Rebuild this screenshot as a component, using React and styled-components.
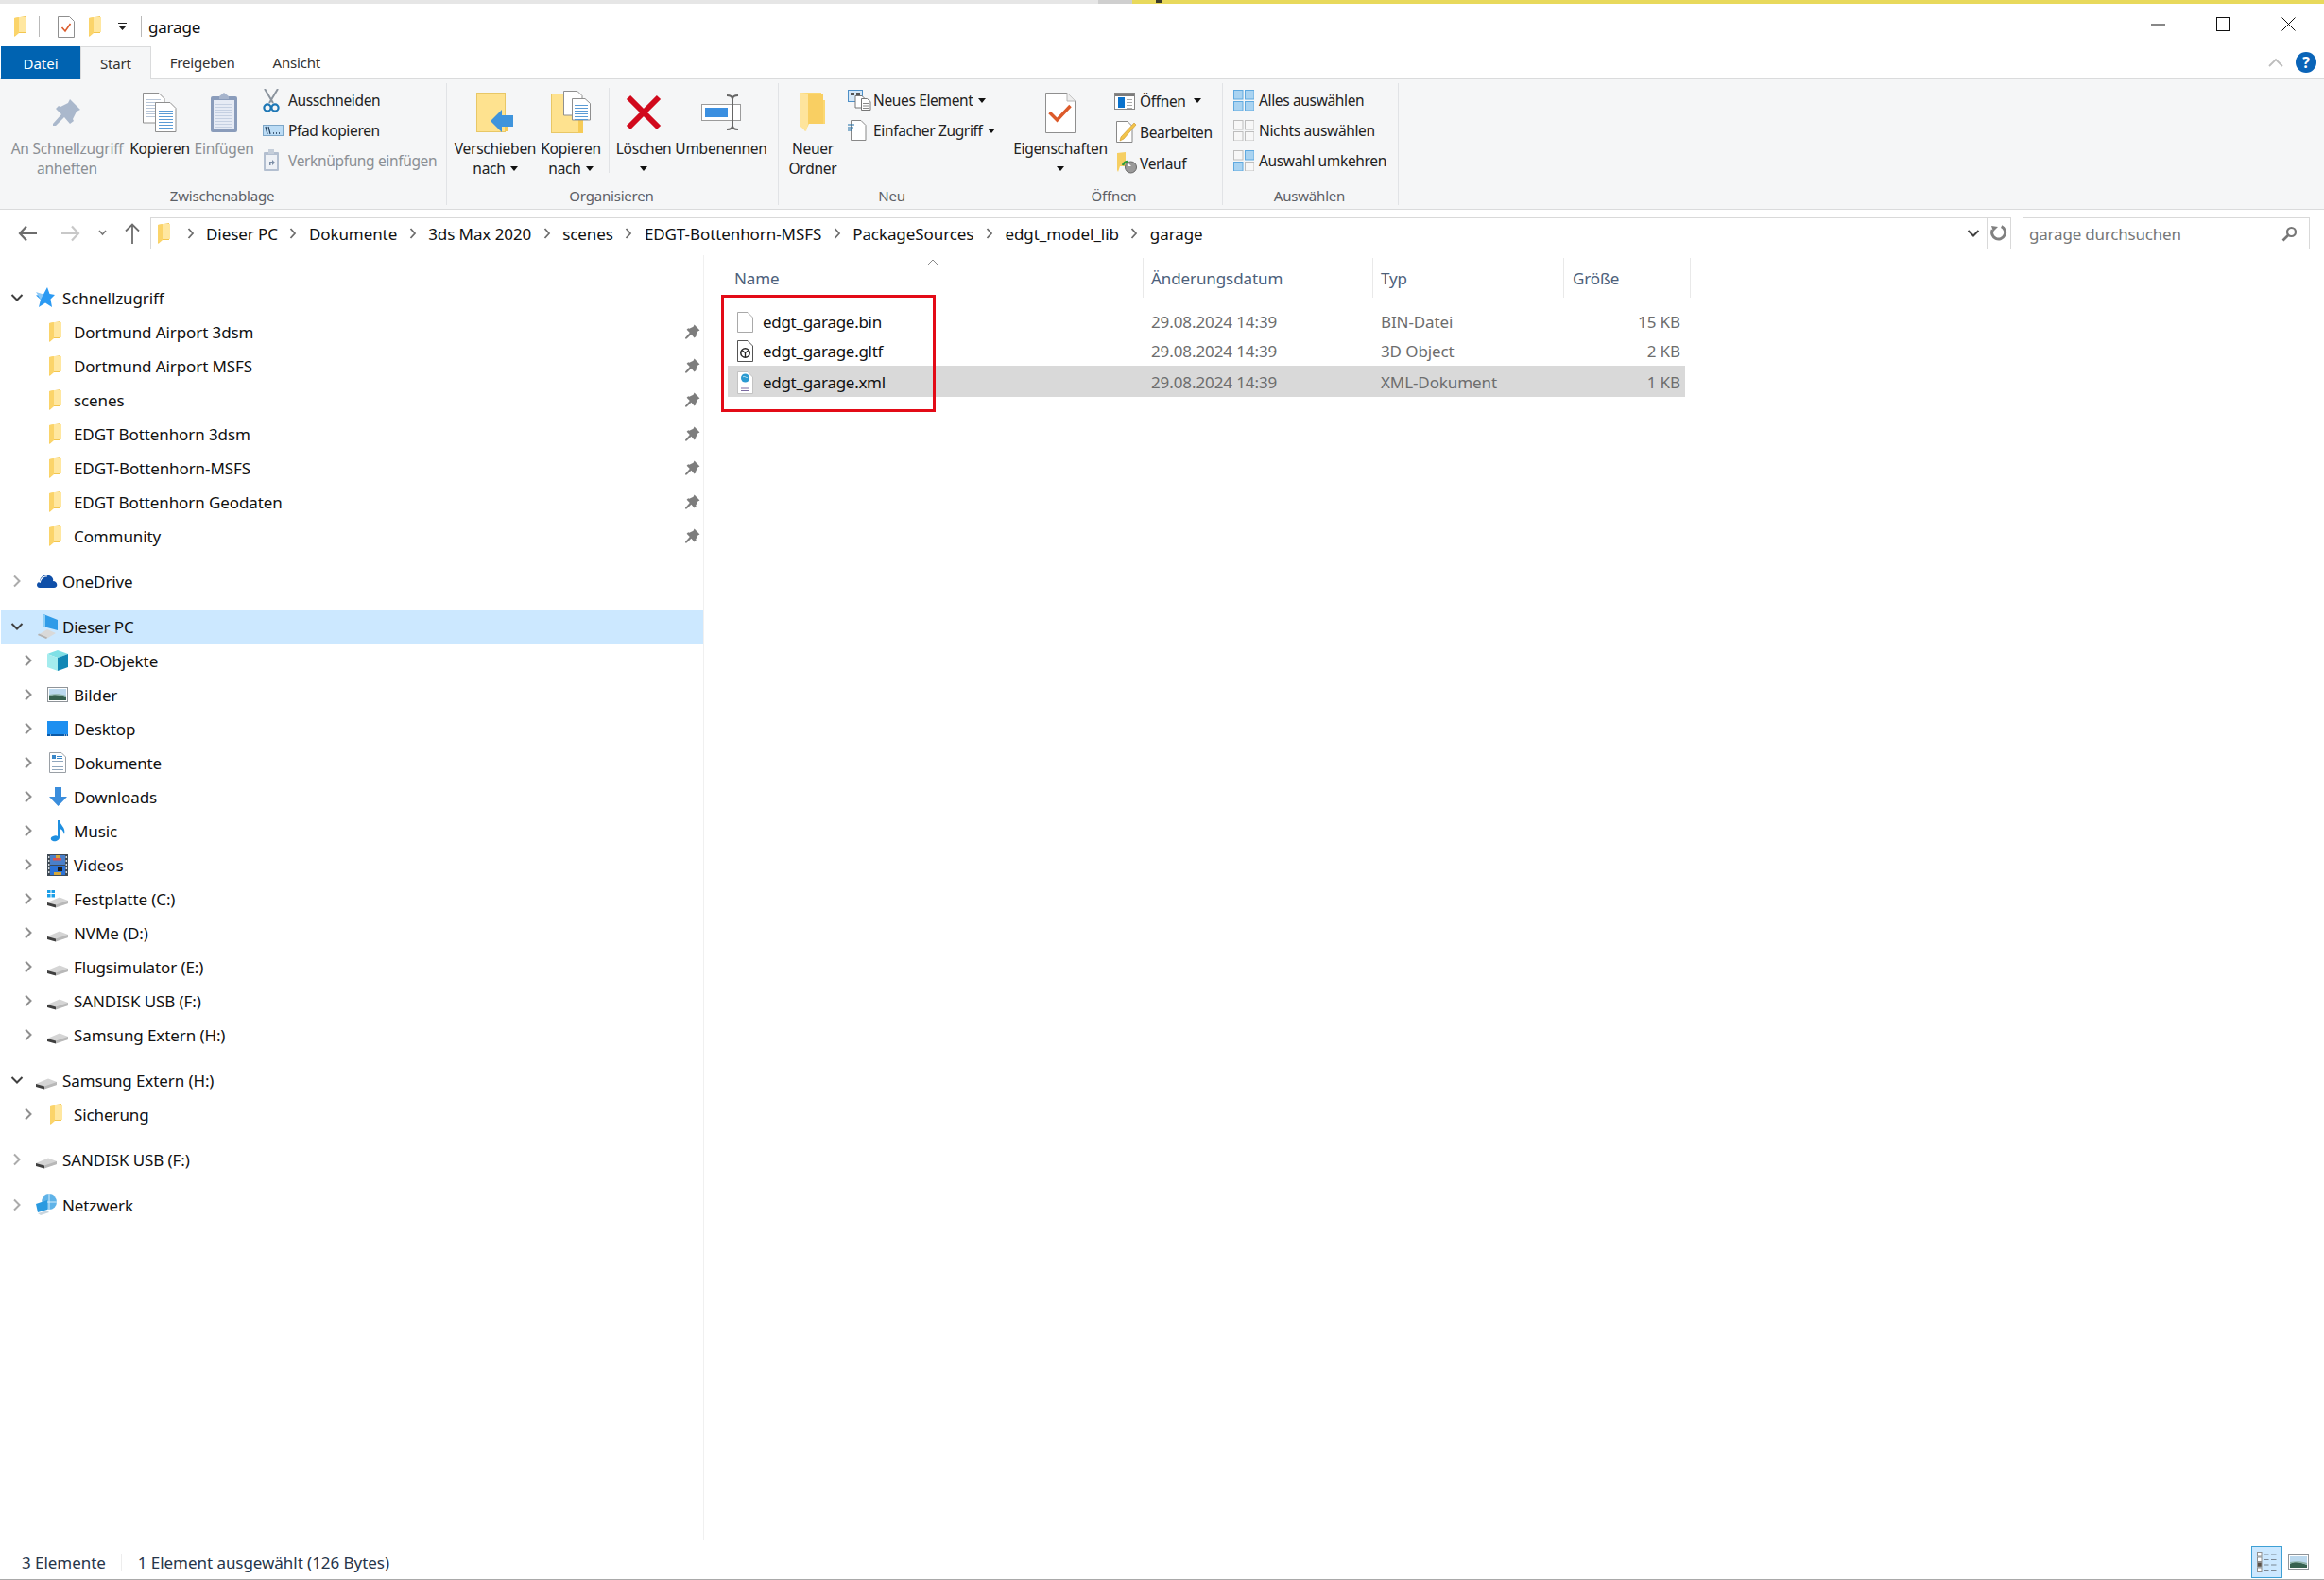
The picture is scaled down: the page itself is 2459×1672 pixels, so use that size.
import React from 'react';
import styled, { createGlobalStyle } from 'styled-components';

const Global = createGlobalStyle`
  html, body { margin: 0; padding: 0; background: #fff; }
  body { font-family: "Noto Sans", "Open Sans", "Liberation Sans", sans-serif; color: #1a1a1a; }
  * { box-sizing: border-box; }
`;

const Window = styled.div`
  width: 2459px;
  height: 1672px;
  display: flex;
  flex-direction: column;
  overflow: hidden;
  background: #fff;
`;

const TopStrip = styled.div`
  height: 4px;
  flex: none;
  display: flex;
`;
const StripGray = styled.div`
  width: 1198px;
  background: linear-gradient(90deg, #e6e6e6 0, #e6e6e6 97%, #cfcfcf 97%);
`;
const StripYellow = styled.div`
  flex: 1;
  background: #e8d95c;
  padding-left: 25px;
  &::before {
    content: "";
    display: block;
    width: 7px;
    height: 3px;
    background: #3a3a2a;
  }
`;

const TitleBar = styled.div`
  height: 45px;
  flex: none;
  display: flex;
  align-items: center;
  padding-left: 15px;
  padding-top: 3px;
`;
const TitleSep = styled.span`
  width: 1px;
  height: 22px;
  background: #b9b9b9;
  margin: ${p => p.$m};
`;
const TitleText = styled.span`
  font-size: 17px;
  letter-spacing: -0.2px;
  color: #111;
`;
const WindowButtons = styled.div`
  margin-left: auto;
  margin-right: 30px;
  margin-bottom: 5px;
  display: flex;
  align-items: center;
  gap: 54px;
`;
const Spaced = styled.span`
  display: inline-flex;
  margin: ${p => p.$m || 0};
`;

const Tabs = styled.div`
  height: 35px;
  flex: none;
  display: flex;
  align-items: stretch;
  padding-left: 1px;
  border-bottom: 1px solid #dadbdc;
`;
const FileTab = styled.div`
  width: 84px;
  background: #0063b1;
  color: #fff;
  font-size: 15px;
  display: flex;
  align-items: center;
  justify-content: center;
  margin-bottom: -1px;
`;
const Tab = styled.div`
  padding: 0 20px;
  font-size: 15px;
  display: flex;
  align-items: center;
  color: #333;
  letter-spacing: -0.2px;
  ${p => p.$active && `
    background: #f5f6f7;
    border: 1px solid #dadbdc;
    border-bottom: none;
    margin-bottom: -1px;
  `}
`;
const TabRight = styled.div`
  margin-left: auto;
  padding-right: 8px;
  display: flex;
  align-items: center;
  gap: 13px;
`;
const Help = styled.div`
  width: 22px;
  height: 22px;
  border-radius: 50%;
  background: #0a64b8;
  color: #fff;
  font-size: 16px;
  font-weight: 700;
  display: flex;
  align-items: center;
  justify-content: center;
`;

const Ribbon = styled.div`
  height: 138px;
  flex: none;
  display: flex;
  background: #f5f6f7;
  border-bottom: 1px solid #dadbdc;
  padding-right: 3px;
`;
const Group = styled.div`
  width: ${p => p.$w}px;
  flex: none;
  display: flex;
  flex-direction: column;
  border-right: 1px solid #e1e3e6;
  margin: 4px 0 4px;
`;
const GroupBody = styled.div`
  flex: none;
  height: 107px;
  padding-top: 3px;
  padding-left: ${p => p.$pl || 0}px;
  display: flex;
`;
const GroupLabel = styled.div`
  text-align: center;
  font-size: 15px;
  line-height: 24px;
  color: #5c6066;
  letter-spacing: -0.2px;
  padding-right: 2px;
`;
const BigButton = styled.div`
  width: ${p => p.$w}px;
  flex: none;
  display: flex;
  flex-direction: column;
  align-items: center;
  font-size: 15.5px;
  letter-spacing: -0.25px;
  line-height: 21px;
  white-space: nowrap;
  color: ${p => (p.$off ? '#8b8f94' : '#222')};
`;
const BigIcon = styled.div`
  height: 56px;
  display: flex;
  align-items: center;
  justify-content: center;
`;
const Caret = styled.span`
  display: inline-block;
  width: 0;
  height: 0;
  margin-left: ${p => p.$ml ?? 5}px;
  vertical-align: 3px;
  border-left: 4.5px solid transparent;
  border-right: 4.5px solid transparent;
  border-top: 5px solid #111;
`;
const InnerSep = styled.div`
  width: 1px;
  height: 90px;
  margin: 2px 0 0 10px;
  background: #e1e3e6;
  flex: none;
`;
const SmallColumn = styled.div`
  margin-left: ${p => p.$ml || 0}px;
  margin-top: -1px;
  display: flex;
  flex-direction: column;
`;
const SmallRow = styled.div`
  height: ${p => p.$h || 32}px;
  display: flex;
  align-items: center;
  font-size: 15.5px;
  letter-spacing: -0.35px;
  white-space: nowrap;
  color: ${p => (p.$off ? '#8b8f94' : '#222')};
`;
const SmallIcon = styled.span`
  width: 27px;
  flex: none;
  display: flex;
  align-items: center;
`;

const NavBar = styled.div`
  height: 48px;
  flex: none;
  display: flex;
  align-items: flex-start;
  padding: 8px 15px 0 19px;
`;
const NavIcon = styled.div`
  height: 33px;
  margin-right: ${p => p.$mr || 0}px;
  display: flex;
  align-items: center;
`;
const AddressBox = styled.div`
  flex: 1;
  height: 34px;
  border: 1px solid #d9d9d9;
  display: flex;
  align-items: center;
  padding-left: 7px;
  font-size: 17px;
  letter-spacing: -0.08px;
  color: #111;
  white-space: nowrap;
`;
const CrumbSep = styled.span`
  width: 33px;
  flex: none;
  display: flex;
  justify-content: center;
`;
const AddressEnd = styled.div`
  margin-left: auto;
  display: flex;
  align-items: center;
  height: 100%;
  padding-right: 7px;
`;
const RefreshBox = styled.div`
  width: 26px;
  height: 34px;
  margin-left: -1px;
  border: 1px solid #d9d9d9;
  display: flex;
  align-items: center;
  justify-content: center;
`;
const SearchBox = styled.div`
  width: 304px;
  height: 34px;
  margin-left: 12px;
  border: 1px solid #d9d9d9;
  display: flex;
  align-items: center;
  justify-content: space-between;
  padding: 0 12px 0 6px;
  font-size: 17px;
  letter-spacing: -0.2px;
  color: #777;
`;

const Main = styled.div`
  flex: 1;
  min-height: 0;
  display: flex;
`;
const Sidebar = styled.div`
  width: 745px;
  flex: none;
  padding: 27px 0 0 1px;
  border-right: 1px solid #f0f0f0;
  margin-bottom: 5px;
`;
const Section = styled.div`
  margin-bottom: 12px;
`;
const Row = styled.div`
  height: 36px;
  display: flex;
  align-items: center;
  padding-left: ${p => (p.$child ? 19 : 7)}px;
  padding-right: 3px;
  font-size: 17px;
  letter-spacing: -0.1px;
  color: #111;
  background: ${p => (p.$selected ? '#cce8ff' : 'transparent')};
`;
const RowChevron = styled.span`
  width: 20px;
  flex: none;
  display: flex;
  justify-content: center;
  margin-right: 10px;
`;
const RowIcon = styled.span`
  width: 28px;
  flex: none;
  display: flex;
  align-items: center;
`;
const RowPin = styled.span`
  margin-left: auto;
  display: flex;
`;

const Content = styled.div`
  flex: 1;
  position: relative;
  padding-left: 25px;
`;
const FileGrid = styled.div`
  display: grid;
  grid-template-columns: 439px 243px 202px 129px;
  width: 1013px;
  align-items: center;
`;
const HeaderGrid = styled(FileGrid)`
  margin-top: 3px;
  height: 42px;
  width: 1019px;
  grid-template-columns: 439px 243px 202px 135px;
  align-items: stretch;
  border-right: 1px solid #e9e9e9;
`;
const HeaderCell = styled.div`
  font-size: 17px;
  letter-spacing: -0.1px;
  color: #4c607a;
  display: flex;
  align-items: center;
  padding-left: ${p => p.$pl}px;
  border-left: ${p => (p.$line ? '1px solid #e9e9e9' : 'none')};
`;
const SortArrow = styled.span`
  position: absolute;
  left: 236px;
  top: 4px;
  display: flex;
`;
const FileList = styled.div`
  margin-top: 10px;
`;
const FileRow = styled(FileGrid)`
  height: ${p => (p.$selected ? 33 : 31)}px;
  padding-top: ${p => (p.$selected ? 2 : 0)}px;
  background: ${p => (p.$selected ? '#d9d9d9' : 'transparent')};
`;
const FileName = styled.div`
  display: flex;
  align-items: center;
  padding-left: 10px;
  font-size: 17px;
  letter-spacing: -0.3px;
  color: #111;
`;
const FileIcon = styled.span`
  width: 27px;
  flex: none;
  display: flex;
`;
const FileMeta = styled.div`
  font-size: 17px;
  letter-spacing: -0.1px;
  color: #6d6d6d;
  padding-left: ${p => p.$pl || 0}px;
  padding-right: ${p => p.$pr || 0}px;
  text-align: ${p => p.$right ? 'right' : 'left'};
`;
const RedBox = styled.div`
  position: absolute;
  left: 18px;
  top: 42px;
  width: 227px;
  height: 124px;
  border: 3px solid #e30b17;
`;

const StatusBar = styled.div`
  height: 37px;
  flex: none;
  display: flex;
  align-items: center;
  padding-left: 23px;
  border-bottom: 1px solid #a9a9a9;
  font-size: 17px;
  letter-spacing: -0.05px;
  color: #26354a;
`;
const StatusItem = styled.span`
  padding-right: ${p => p.$pr}px;
  margin-right: 17px;
  position: relative;
  &::after {
    content: "";
    position: absolute;
    right: 0;
    top: 3px;
    bottom: 3px;
    width: 1px;
    background: #ededed;
  }
`;
const ViewButtons = styled.div`
  margin-left: auto;
  margin-right: 16px;
  display: flex;
  align-items: center;
  gap: 6px;
`;
const ViewActive = styled.div`
  width: 33px;
  height: 34px;
  background: #cce8ff;
  border: 1px solid #3ea0d5;
  display: flex;
  align-items: center;
  justify-content: center;
`;

/* ---------- drawings ---------- */

const Folder = ({ w = 15, h = 22 }) => (
  <svg width={w} height={h} viewBox="0 0 15 22">
    <path d="M0 2 L12 0 V18 H4 L0 22 Z" fill="#f3c64f" />
    <path d="M4 1 H13 V17 H4 Z" fill="#ffe7a0" />
    <path d="M0 2 L5 1 V18 L1 21.5 L0 20 Z" fill="#fbd46a" />
  </svg>
);

const BigFolder = () => (
  <svg width="29" height="42" viewBox="0 0 29 42">
    <path d="M1 0 H23 V8 H27 V33 H10 L6 41 L1 34 Z" fill="#fbd873" />
    <path d="M9 1 H25 V33 H9 Z" fill="#f9cf62" />
    <path d="M1 0 L9 1 V33 L7 41 L1 36 Z" fill="#fee49c" />
  </svg>
);

const TitleCheckDoc = () => (
  <svg width="18" height="23" viewBox="0 0 18 23">
    <path d="M.5.5h12l5 5v17H.5z" fill="#fff" stroke="#8f8f8f" />
    <path d="M4.5 12l3.5 4 5.5-8" fill="none" stroke="#db5b2b" strokeWidth="1.6" />
  </svg>
);

const Chev = ({ light, dark }) => (
  <svg width="10" height="14" viewBox="0 0 10 14">
    <path d="M2 1.5 L7.5 7 L2 12.5" fill="none" stroke={dark ? '#444' : light ? '#ababab' : '#8f8f8f'} strokeWidth="2" />
  </svg>
);

const ChevDown = () => (
  <svg width="14" height="10" viewBox="0 0 14 10">
    <path d="M1.5 2 L7 7.5 L12.5 2" fill="none" stroke="#404040" strokeWidth="2" />
  </svg>
);

const CrumbChev = () => (
  <svg width="8" height="12" viewBox="0 0 8 12">
    <path d="M1.5 1 L6 6 L1.5 11" fill="none" stroke="#6d6d6d" strokeWidth="1.8" />
  </svg>
);

const PinPath = "M18 1 L29 12 L25 14 L21 22 L22 24 L18 27 L12 20 L3 29 L0 29 L0 27 L9 17 L3 11 L6 8 L8 9 L16 5 Z";
const Pin = ({ size = 16, color = '#7d7d7d' }) => (
  <svg width={size} height={size} viewBox="0 0 30 30"><path d={PinPath} fill={color} /></svg>
);

const DocLines = ({ x, y, w, n, step = 3, c = '#5b9bd5' }) => (
  <g stroke={c} strokeWidth="1">
    {Array.from({ length: n }, (_, i) => (
      <line key={i} x1={x} x2={x + w} y1={y + i * step + 0.5} y2={y + i * step + 0.5} />
    ))}
  </g>
);

const CopyIcon = () => (
  <svg width="36" height="42" viewBox="0 0 36 42">
    <path d="M.5.5H17l6 6V32H.5z" fill="#fff" stroke="#8f8f8f" />
    <DocLines x={4} y={7} w={15} n={7} c="#b8c6d8" />
    <path d="M13.5 10.5H29l6 6V41.5H13.5z" fill="#fff" stroke="#8f8f8f" />
    <DocLines x={17} y={19} w={15} n={7} />
  </svg>
);

const Clipboard = () => (
  <svg width="30" height="43" viewBox="0 0 30 43">
    <rect x="1" y="4" width="28" height="38" rx="2" fill="#8a9cbb" />
    <path d="M10 4 L15 0 L20 4 V7 H10 Z" fill="#a6b4cc" />
    <rect x="4" y="8" width="22" height="31" fill="#e6ebf5" />
    <DocLines x={6} y={12} w={18} n={9} c="#c5d0e2" />
  </svg>
);

const Scissors = () => (
  <svg width="18" height="25" viewBox="0 0 18 25">
    <path d="M2 0 L11 15 M16 0 L7 15" stroke="#8b949e" strokeWidth="2" fill="none" />
    <circle cx="5" cy="20" r="3.6" fill="none" stroke="#1c76b5" strokeWidth="2.2" />
    <circle cx="13" cy="20" r="3.6" fill="none" stroke="#1c76b5" strokeWidth="2.2" />
  </svg>
);

const PathIcon = () => (
  <svg width="22" height="12" viewBox="0 0 22 12">
    <rect x=".5" y=".5" width="21" height="11" fill="#bcdcf5" stroke="#7ca6c8" />
    <path d="M3 2l2 8M6 2l2 8" stroke="#1a3553" strokeWidth="1.1" />
    <path d="M11 9h1M14 9h1M17 9h1" stroke="#1a3553" strokeWidth="1.3" />
  </svg>
);

const ShortcutClip = () => (
  <svg width="18" height="24" viewBox="0 0 18 24">
    <rect x="1" y="3" width="16" height="20" rx="1" fill="#b3bfd0" />
    <rect x="6" y="0" width="6" height="5" fill="#c5ceda" />
    <rect x="3" y="6" width="12" height="15" fill="#eef1f6" />
    <path d="M7 17v-4h3v-2l3 3-3 3v-2H8.500v2z" fill="#7c8ea6" />
  </svg>
);

const MoveFolder = () => (
  <svg width="40" height="43" viewBox="0 0 40 43">
    <rect x=".5" y=".5" width="30" height="41" fill="#fee28f" stroke="#e8c766" />
    <rect x="30" y="24" width="3" height="17" fill="#f6cb57" />
    <path d="M15 30 L27 18 V24 H39 V36 H27 V42 Z" fill="#3f94dc" />
  </svg>
);

const CopyFolder = () => (
  <svg width="42" height="46" viewBox="0 0 42 46">
    <rect x=".5" y="3.500" width="30" height="41" fill="#fee28f" stroke="#e8c766" />
    <rect x="29" y="30" width="5" height="15" fill="#f6cb57" />
    <path d="M13.500.5H28l5 5V26H13.500z" fill="#fff" stroke="#8f8f8f" />
    <path d="M22.500 8.500H36l5.500 5V31H22.500z" fill="#fff" stroke="#8f8f8f" />
    <DocLines x={25} y={15} w={14} n={6} />
  </svg>
);

const DeleteIcon = () => (
  <svg width="38" height="38" viewBox="0 0 38 38">
    <path d="M3 3 L35 35 M35 3 L3 35" stroke="#d1091c" strokeWidth="6" />
  </svg>
);

const RenameIcon = () => (
  <svg width="43" height="38" viewBox="0 0 43 38">
    <rect x=".5" y="10.500" width="41" height="17" fill="#fff" stroke="#9b9b9b" />
    <rect x="4" y="14" width="24" height="10" fill="#3b8fe0" />
    <path d="M27 1c4 0 6 1 6 4v28c0 3-2 4-6 4M39 1c-4 0-6 1-6 4v28c0 3 2 4 6 4" fill="none" stroke="#666" strokeWidth="2" />
  </svg>
);

const NewItem = () => (
  <svg width="25" height="22" viewBox="0 0 25 22">
    <rect x=".5" y=".5" width="15" height="12" fill="#d5e7f6" stroke="#4d8fc7" />
    <rect x="3" y="3" width="4" height="3" fill="#555" /><rect x="9" y="3" width="4" height="3" fill="#555" />
    <path d="M8 6.500H15l3 3V19H8z" fill="#fff" stroke="#777" />
    <path d="M14.500 9.500h6l3.500 3V21.500h-9.500z" fill="#fff" stroke="#777" />
    <DocLines x={16} y={14} w={6} n={3} step={2.500} c="#888" />
  </svg>
);

const EasyAccess = () => (
  <svg width="20" height="22" viewBox="0 0 20 22">
    <path d="M3.500.5H14l5 5V21.500H3.500z" fill="#fff" stroke="#888" />
    <path d="M0 5h7M0 8h6M0 11h4" stroke="#1f6fa8" strokeWidth="1.2" />
  </svg>
);

const PropsIcon = () => (
  <svg width="32" height="43" viewBox="0 0 32 43">
    <path d="M.5.5H23l8.500 8.500V42.500H.5z" fill="#fff" stroke="#8f8f8f" />
    <path d="M23 .5V9h8.500" fill="#eee" stroke="#b5b5b5" />
    <path d="M4.500 21l8 8 14-15" fill="none" stroke="#dc5a2a" strokeWidth="3.400" />
  </svg>
);

const OpenIcon = () => (
  <svg width="22" height="18" viewBox="0 0 22 18">
    <rect x=".5" y=".5" width="21" height="17" fill="#fff" stroke="#888" />
    <rect x="1" y="1" width="20" height="3" fill="#7b7b7b" />
    <rect x="4" y="5" width="7" height="11" fill="#0a72cc" />
    <DocLines x={13} y={7} w={6} n={4} c="#aaa" />
  </svg>
);

const EditIcon = () => (
  <svg width="22" height="23" viewBox="0 0 22 23">
    <path d="M.5.5H12l5 5V22.500H.5z" fill="#fff" stroke="#888" />
    <path d="M19 2 L21 4 L8 19 L4 21 L5 17 Z" fill="#f2c34a" stroke="#c9932a" strokeWidth=".6" />
  </svg>
);

const HistoryIcon = () => (
  <svg width="21" height="23" viewBox="0 0 21 23">
    <path d="M0 1 L9 0 V15 H3 L1 21 L0 19 Z" fill="#f6cf63" />
    <circle cx="14.500" cy="16" r="6" fill="#9a9a9a" stroke="#666" />
    <path d="M6 14a6 6 0 0 1 6-4" fill="none" stroke="#2d9c3c" strokeWidth="2.500" />
    <path d="M12 12l3 3h-3z" fill="#fff" />
  </svg>
);

const SelectIcon = ({ on = [1, 1, 1, 1], color = '#5fa9df', fill = '#a9d3f1' }) => {
  const spots = [[0, 0], [12, 0], [0, 12], [12, 12]];
  return (
    <svg width="22" height="22" viewBox="0 0 22 22">
      {spots.map(([x, y], i) => (
        <rect key={i} x={x + .5} y={y + .5} width="9.500" height="9.500"
          fill={on[i] ? fill : '#f7f7f7'} stroke={on[i] ? color : '#bdbdbd'} />
      ))}
    </svg>
  );
};

const ArrowLeft = ({ color = '#6d6d6d' }) => (
  <svg width="20" height="18" viewBox="0 0 20 18">
    <path d="M9 1.500 L2 9 L9 16.500 M2 9 H20" fill="none" stroke={color} strokeWidth="2.200" />
  </svg>
);

const ArrowRight = ({ color = '#c8c8c8' }) => (
  <svg width="20" height="18" viewBox="0 0 20 18">
    <path d="M11 1.500 L18 9 L11 16.500 M18 9 H0" fill="none" stroke={color} strokeWidth="2.200" />
  </svg>
);

const ArrowUp = () => (
  <svg width="16" height="22" viewBox="0 0 16 22">
    <path d="M1 8.500 L8 1.500 L15 8.500 M8 1.500 V22" fill="none" stroke="#6d6d6d" strokeWidth="1.800" />
  </svg>
);

const Star = () => (
  <svg width="20" height="22" viewBox="0 0 20 22">
    <path d="M12 0 L14.500 7 L20 8 L15.500 12.500 L17 21 L10 16.500 L3 21 L5 13 L0 8.500 L8 7.500 Z" fill="#2b9af3" />
    <path d="M0 5 L8 7.500 L5 13 Z" fill="#8cc9f7" />
  </svg>
);

const Cloud = () => (
  <svg width="23" height="18" viewBox="0 0 23 18">
    <path d="M4 16 C0 16 0 10 4 10 C4 5 9 1 13 3 C17 3 19 7 18 9 C23 9 24 16 19 16 Z" fill="#0f4fa8" />
    <path d="M4 11 C5 6 9 3 12 4" fill="none" stroke="#fff" strokeWidth="1.200" />
  </svg>
);

const ThisPC = () => (
  <svg width="24" height="26" viewBox="0 0 24 26">
    <path d="M8 0 L23 6 V17 L8 13 Z" fill="#2f9be8" />
    <path d="M8 0 L10 1 V13 L8 13 Z" fill="#8ccdf5" />
    <path d="M2 22 L12 16 L21 20 L11 26 Z" fill="#d9d9d9" />
    <path d="M2 22 L11 26 L12 24.500 L3 20.500 Z" fill="#b2b2b2" />
  </svg>
);

const Cube = () => (
  <svg width="22" height="22" viewBox="0 0 22 22">
    <path d="M0 4 L11 0 L22 4 L11 8 Z" fill="#7fe0e6" />
    <path d="M0 4 L11 8 V22 L0 18 Z" fill="#a4ecee" />
    <path d="M22 4 L11 8 V22 L22 18 Z" fill="#1287b5" />
  </svg>
);

const PicturesIcon = ({ w = 22, h = 16 }) => (
  <svg width={w} height={h} viewBox="0 0 22 16">
    <rect x=".5" y=".5" width="21" height="15" fill="#fff" stroke="#8f9499" />
    <rect x="2" y="2" width="18" height="12" fill="#bcd9ee" />
    <path d="M2 10 C8 6 14 9 20 11 V14 H2 Z" fill="#36614f" />
    <path d="M2 8 C8 7 14 7 20 9 V11 C14 9 8 7 2 10 Z" fill="#8eb2a8" />
  </svg>
);

const DesktopIcon = () => (
  <svg width="22" height="16" viewBox="0 0 22 16">
    <rect width="22" height="16" fill="#1d8ff0" />
    <rect y="14" width="22" height="2" fill="#0b5aa8" />
    <path d="M3 15h1M18 15h1M20 15h1" stroke="#fff" />
  </svg>
);

const DocsIcon = () => (
  <svg width="18" height="22" viewBox="0 0 18 22">
    <path d="M.5.5H13l4.500 4.500V21.500H.5z" fill="#fff" stroke="#9aa0a6" />
    <rect x="3" y="3" width="4" height="4" fill="#3a87c8" />
    <DocLines x={3} y={9} w={12} n={4} step={3} c="#8fa6bd" />
    <DocLines x={8} y={4} w={6} n={2} step={2} c="#3a87c8" />
  </svg>
);

const DownloadIcon = () => (
  <svg width="19" height="20" viewBox="0 0 19 20">
    <path d="M6 0 H13 V10 H19 L9.500 20 L0 10 H6 Z" fill="#3a8ddc" />
  </svg>
);

const MusicIcon = () => (
  <svg width="17" height="23" viewBox="0 0 17 23">
    <path d="M8 0 H10 C10 5 17 7 15 15 C14 11 12 9 10 9 V18 C10 21 6 23 3 22 C0 21 0 18 3 17 C5 16 7 16 8 17 Z" fill="#1f8fe0" />
  </svg>
);

const VideoIcon = () => (
  <svg width="22" height="23" viewBox="0 0 22 23">
    <rect width="22" height="23" fill="#3f4a55" />
    <rect x="3" y="1" width="16" height="10" fill="#4a7fc9" />
    <rect x="3" y="12" width="16" height="10" fill="#2b72d6" />
    <rect x="6" y="4" width="9" height="2.500" fill="#d9534f" />
    <rect x="9" y="1" width="5" height="3" fill="#d6a83a" />
    <rect x="7" y="19" width="8" height="3" fill="#d6a83a" />
    <rect x="11" y="13" width="5" height="5" fill="#1b1b1b" />
    <g fill="#d8dde2">
      {[2, 6, 10, 14, 18].map(y => <rect key={y} x="1" y={y} width="1.400" height="2" />)}
      {[2, 6, 10, 14, 18].map(y => <rect key={y} x="19.600" y={y} width="1.400" height="2" />)}
    </g>
  </svg>
);

const Drive = ({ win }) => (
  <svg width="22" height="19" viewBox="0 0 22 19">
    {win && (
      <g fill="#1c9fe8">
        <rect x="0" y="0" width="3.500" height="3" />
        <rect x="4.500" y="0" width="3.500" height="3" />
        <rect x="0" y="4" width="3.500" height="3.500" />
        <rect x="4.500" y="4" width="3.500" height="3.500" />
      </g>
    )}
    <path d="M0 13 L13 7.500 L22 11 V14 L8 18 L0 15.500 Z" fill="#d5d5d5" />
    <path d="M0 13 L9 15.500 V18.500 L0 16 Z" fill="#3f3f3f" />
    <path d="M9 15.500 L22 11 V14 L9 18.500 Z" fill="#b8b8b8" />
  </svg>
);

const Network = () => (
  <svg width="22" height="22" viewBox="0 0 22 22">
    <circle cx="14" cy="8" r="8" fill="#5fb3e8" />
    <path d="M14 0v16M6 8h16" stroke="#d5edfb" strokeWidth="1" />
    <path d="M0 10 L12 6 V16 L2 19 Z" fill="#2a9ae0" />
    <path d="M2 20 L12 17 L14 19 L5 22 Z" fill="#c9d5de" />
  </svg>
);

const BlankFile = () => (
  <svg width="17" height="22" viewBox="0 0 17 22">
    <path d="M.5.5H11l5.500 5.500V21.500H.5z" fill="#fff" stroke="#a9a9a9" />
  </svg>
);

const GltfFile = () => (
  <svg width="17" height="23" viewBox="0 0 17 23">
    <path d="M.5.5H11l5.500 5.500V22.500H.5z" fill="#fff" stroke="#555" />
    <circle cx="8.500" cy="13.500" r="4.700" fill="none" stroke="#222" strokeWidth="1.500" />
    <path d="M8.500 13.500V18M8.500 13.500L5 10.500M8.500 13.500L12 10.500" stroke="#222" strokeWidth="1.300" />
  </svg>
);

const XmlFile = () => (
  <svg width="17" height="24" viewBox="0 0 17 24">
    <path d="M.5.5H11l5.500 5.500V23.500H.5z" fill="#fff" stroke="#c3c3c3" />
    <circle cx="8.500" cy="7" r="4.500" fill="#2b9ad1" />
    <path d="M6 6c2-2 4 2 5 0" stroke="#c6ecf7" fill="none" />
    <DocLines x={4} y={15} w={9} n={3} step={2.500} c="#7b6aa0" />
  </svg>
);

const MinIcon = () => <svg width="15" height="2" viewBox="0 0 15 2"><rect width="15" height="1" y=".5" fill="#111" /></svg>;
const MaxIcon = () => <svg width="15" height="15" viewBox="0 0 15 15"><rect x=".5" y=".5" width="14" height="14" fill="none" stroke="#111" /></svg>;
const CloseIcon = () => <svg width="15" height="15" viewBox="0 0 15 15"><path d="M.5.5L14.500 14.500M14.500.5L.5 14.500" stroke="#111" /></svg>;

const DetailsView = () => (
  <svg width="21" height="22" viewBox="0 0 21 22">
    {[0, 5.500, 11, 16.500].map((y, i) => (
      <g key={y}>
        <rect x=".5" y={y + .5} width="4.500" height="4.500" fill={i === 2 ? '#5b5047' : '#fff'} stroke="#8f8f8f" />
        <path d={`M7 ${y + 3}h5.500M15 ${y + 3}h5.500`} stroke="#7b8794" strokeWidth="1.200" />
      </g>
    ))}
  </svg>
);

/* ---------- data ---------- */

const pinned = ['Dortmund Airport 3dsm', 'Dortmund Airport MSFS', 'scenes', 'EDGT Bottenhorn 3dsm', 'EDGT-Bottenhorn-MSFS', 'EDGT Bottenhorn Geodaten', 'Community'];

const pcItems = [
  ['3D-Objekte', <Cube />],
  ['Bilder', <PicturesIcon />],
  ['Desktop', <DesktopIcon />],
  ['Dokumente', <Spaced $m="0 0 0 2px"><DocsIcon /></Spaced>],
  ['Downloads', <Spaced $m="0 0 0 2px"><DownloadIcon /></Spaced>],
  ['Music', <Spaced $m="0 0 0 3px"><MusicIcon /></Spaced>],
  ['Videos', <VideoIcon />],
  ['Festplatte (C:)', <Drive win />],
  ['NVMe (D:)', <Drive />],
  ['Flugsimulator (E:)', <Drive />],
  ['SANDISK USB (F:)', <Drive />],
  ['Samsung Extern (H:)', <Drive />],
];

const crumbs = ['Dieser PC', 'Dokumente', '3ds Max 2020', 'scenes', 'EDGT-Bottenhorn-MSFS', 'PackageSources', 'edgt_model_lib', 'garage'];

const files = [
  { name: 'edgt_garage.bin', icon: <BlankFile />, type: 'BIN-Datei', size: '15 KB' },
  { name: 'edgt_garage.gltf', icon: <GltfFile />, type: '3D Object', size: '2 KB' },
  { name: 'edgt_garage.xml', icon: <XmlFile />, type: 'XML-Dokument', size: '1 KB', selected: true },
];

const TreeRow = ({ child, open, selected, icon, label, pin }) => (
  <Row $child={child} $selected={selected}>
    <RowChevron>{open ? <ChevDown /> : <Chev light={!child} />}</RowChevron>
    <RowIcon>{icon}</RowIcon>
    {label}
    {pin && <RowPin><Pin /></RowPin>}
  </Row>
);

const Big = ({ w, icon, off, children }) => (
  <BigButton $w={w} $off={off}>
    <BigIcon>{icon}</BigIcon>
    {children}
  </BigButton>
);

const Small = ({ icon, off, h, children }) => (
  <SmallRow $off={off} $h={h}>
    <SmallIcon>{icon}</SmallIcon>
    {children}
  </SmallRow>
);

export default function App() {
  return (
    <Window>
      <Global />
      <TopStrip><StripGray /><StripYellow /></TopStrip>

      <TitleBar>
        <Folder />
        <TitleSep $m="0 19px 0 11px" />
        <TitleCheckDoc />
        <Spaced $m="0 0 0 15px"><Folder /></Spaced>
        <Spaced $m="0 0 0 16px">
          <svg width="9" height="9" viewBox="0 0 9 9"><path d="M0 0h9v1H0zM0 3h9L4.500 8z" fill="#222" /></svg>
        </Spaced>
        <TitleSep $m="0 7px 0 15px" />
        <TitleText>garage</TitleText>
        <WindowButtons>
          <MinIcon />
          <MaxIcon />
          <CloseIcon />
        </WindowButtons>
      </TitleBar>

      <Tabs>
        <FileTab>Datei</FileTab>
        <Tab $active>Start</Tab>
        <Tab>Freigeben</Tab>
        <Tab>Ansicht</Tab>
        <TabRight>
          <svg width="16" height="10" viewBox="0 0 16 10"><path d="M1 9 L8 2 L15 9" fill="none" stroke="#bdbdbd" strokeWidth="1.800" /></svg>
          <Help>?</Help>
        </TabRight>
      </Tabs>

      <Ribbon>
        <Group $w={473}>
          <GroupBody $pl={12}>
            <Big w={118} off icon={<Pin size={30} color="#aab8cc" />}>An Schnellzugriff<span>anheften</span></Big>
            <Big w={78} icon={<CopyIcon />}>Kopieren</Big>
            <Big w={58} off icon={<Clipboard />}>Einfügen</Big>
            <SmallColumn $ml={12}>
              <Small icon={<Scissors />}>Ausschneiden</Small>
              <Small icon={<PathIcon />}>Pfad kopieren</Small>
              <Small off icon={<ShortcutClip />}>Verknüpfung einfügen</Small>
            </SmallColumn>
          </GroupBody>
          <GroupLabel>Zwischenablage</GroupLabel>
        </Group>
        <Group $w={351}>
          <GroupBody $pl={1}>
            <Big w={100} icon={<MoveFolder />}>Verschieben<span>nach<Caret /></span></Big>
            <Big w={60} icon={<CopyFolder />}>Kopieren<span>nach<Caret /></span></Big>
            <InnerSep />
            <Big w={72} icon={<DeleteIcon />}>Löschen<span><Caret $ml={0} /></span></Big>
            <Big w={92} icon={<RenameIcon />}>Umbenennen</Big>
          </GroupBody>
          <GroupLabel>Organisieren</GroupLabel>
        </Group>
        <Group $w={242}>
          <GroupBody $pl={1}>
            <Big w={70} icon={<BigFolder />}>Neuer<span>Ordner</span></Big>
            <SmallColumn $ml={2}>
              <Small icon={<NewItem />}>Neues Element<Caret /></Small>
              <Small icon={<EasyAccess />}>Einfacher Zugriff<Caret /></Small>
            </SmallColumn>
          </GroupBody>
          <GroupLabel>Neu</GroupLabel>
        </Group>
        <Group $w={228}>
          <GroupBody $pl={1}>
            <Big w={110} icon={<PropsIcon />}>Eigenschaften<span><Caret $ml={0} /></span></Big>
            <SmallColumn $ml={2}>
              <Small h={33} icon={<OpenIcon />}>Öffnen<Caret $ml={8} /></Small>
              <Small h={33} icon={<Spaced $m="0 0 0 2px"><EditIcon /></Spaced>}>Bearbeiten</Small>
              <Small h={33} icon={<Spaced $m="0 0 0 3px"><HistoryIcon /></Spaced>}>Verlauf</Small>
            </SmallColumn>
          </GroupBody>
          <GroupLabel>Öffnen</GroupLabel>
        </Group>
        <Group $w={186}>
          <GroupBody $pl={11}>
            <SmallColumn>
              <Small icon={<SelectIcon />}>Alles auswählen</Small>
              <Small icon={<SelectIcon on={[0, 0, 0, 0]} />}>Nichts auswählen</Small>
              <Small icon={<SelectIcon on={[0, 1, 1, 0]} />}>Auswahl umkehren</Small>
            </SmallColumn>
          </GroupBody>
          <GroupLabel>Auswählen</GroupLabel>
        </Group>
      </Ribbon>

      <NavBar>
        <NavIcon $mr={26}><ArrowLeft /></NavIcon>
        <NavIcon $mr={19}><ArrowRight /></NavIcon>
        <NavIcon $mr={19}>
          <svg width="9" height="7" viewBox="0 0 9 7"><path d="M1 1 L4.500 5 L8 1" fill="none" stroke="#777" strokeWidth="1.600" /></svg>
        </NavIcon>
        <NavIcon $mr={11}><ArrowUp /></NavIcon>
        <AddressBox>
          <Folder />
          <Spaced $m="0 0 0 3px" />
          {crumbs.map(c => (
            <React.Fragment key={c}>
              <CrumbSep><CrumbChev /></CrumbSep>
              {c}
            </React.Fragment>
          ))}
          <AddressEnd><ChevDown /></AddressEnd>
        </AddressBox>
        <RefreshBox>
          <svg width="18" height="18" viewBox="0 0 18 18">
            <path d="M4 3 A7 7 0 1 0 14 3" transform="rotate(-20 9 9)" fill="none" stroke="#808080" strokeWidth="3" />
            <path d="M1 1 L8 2 L3 7 Z" fill="#808080" />
          </svg>
        </RefreshBox>
        <SearchBox>
          garage durchsuchen
          <svg width="17" height="17" viewBox="0 0 17 17">
            <circle cx="10.500" cy="6.500" r="4.500" fill="none" stroke="#777" strokeWidth="2.200" />
            <path d="M7 10 L1.500 15.500" stroke="#777" strokeWidth="2.600" />
          </svg>
        </SearchBox>
      </NavBar>

      <Main>
        <Sidebar>
          <Section>
            <TreeRow open icon={<Star />} label="Schnellzugriff" />
            {pinned.map(n => (
              <Row key={n} $child>
                <RowChevron />
                <RowIcon><Spaced $m="0 0 0 2px"><Folder /></Spaced></RowIcon>
                {n}
                <RowPin><Pin /></RowPin>
              </Row>
            ))}
          </Section>
          <Section>
            <TreeRow icon={<Cloud />} label="OneDrive" />
          </Section>
          <Section>
            <TreeRow open selected icon={<ThisPC />} label="Dieser PC" />
            {pcItems.map(([label, icon]) => (
              <TreeRow key={label} child icon={icon} label={label} />
            ))}
          </Section>
          <Section>
            <TreeRow open icon={<Drive />} label="Samsung Extern (H:)" />
            <TreeRow child icon={<Spaced $m="0 0 0 3px"><Folder /></Spaced>} label="Sicherung" />
          </Section>
          <Section>
            <TreeRow icon={<Drive />} label="SANDISK USB (F:)" />
          </Section>
          <Section>
            <TreeRow icon={<Network />} label="Netzwerk" />
          </Section>
        </Sidebar>

        <Content>
          <SortArrow>
            <svg width="12" height="7" viewBox="0 0 12 7"><path d="M1 6 L6 1 L11 6" fill="none" stroke="#8a8a8a" /></svg>
          </SortArrow>
          <HeaderGrid>
            <HeaderCell $pl={7}>Name</HeaderCell>
            <HeaderCell $pl={8} $line>Änderungsdatum</HeaderCell>
            <HeaderCell $pl={8} $line>Typ</HeaderCell>
            <HeaderCell $pl={9} $line>Größe</HeaderCell>
          </HeaderGrid>
          <FileList>
            {files.map(f => (
              <FileRow key={f.name} $selected={f.selected}>
                <FileName><FileIcon>{f.icon}</FileIcon>{f.name}</FileName>
                <FileMeta $pl={9}>29.08.2024 14:39</FileMeta>
                <FileMeta $pl={9}>{f.type}</FileMeta>
                <FileMeta $right $pr={5}>{f.size}</FileMeta>
              </FileRow>
            ))}
          </FileList>
          <RedBox />
        </Content>
      </Main>

      <StatusBar>
        <StatusItem $pr={17}>3 Elemente</StatusItem>
        <StatusItem $pr={17}>1 Element ausgewählt (126 Bytes)</StatusItem>
        <ViewButtons>
          <ViewActive><DetailsView /></ViewActive>
          <PicturesIcon w={22} h={16} />
        </ViewButtons>
      </StatusBar>
    </Window>
  );
}
